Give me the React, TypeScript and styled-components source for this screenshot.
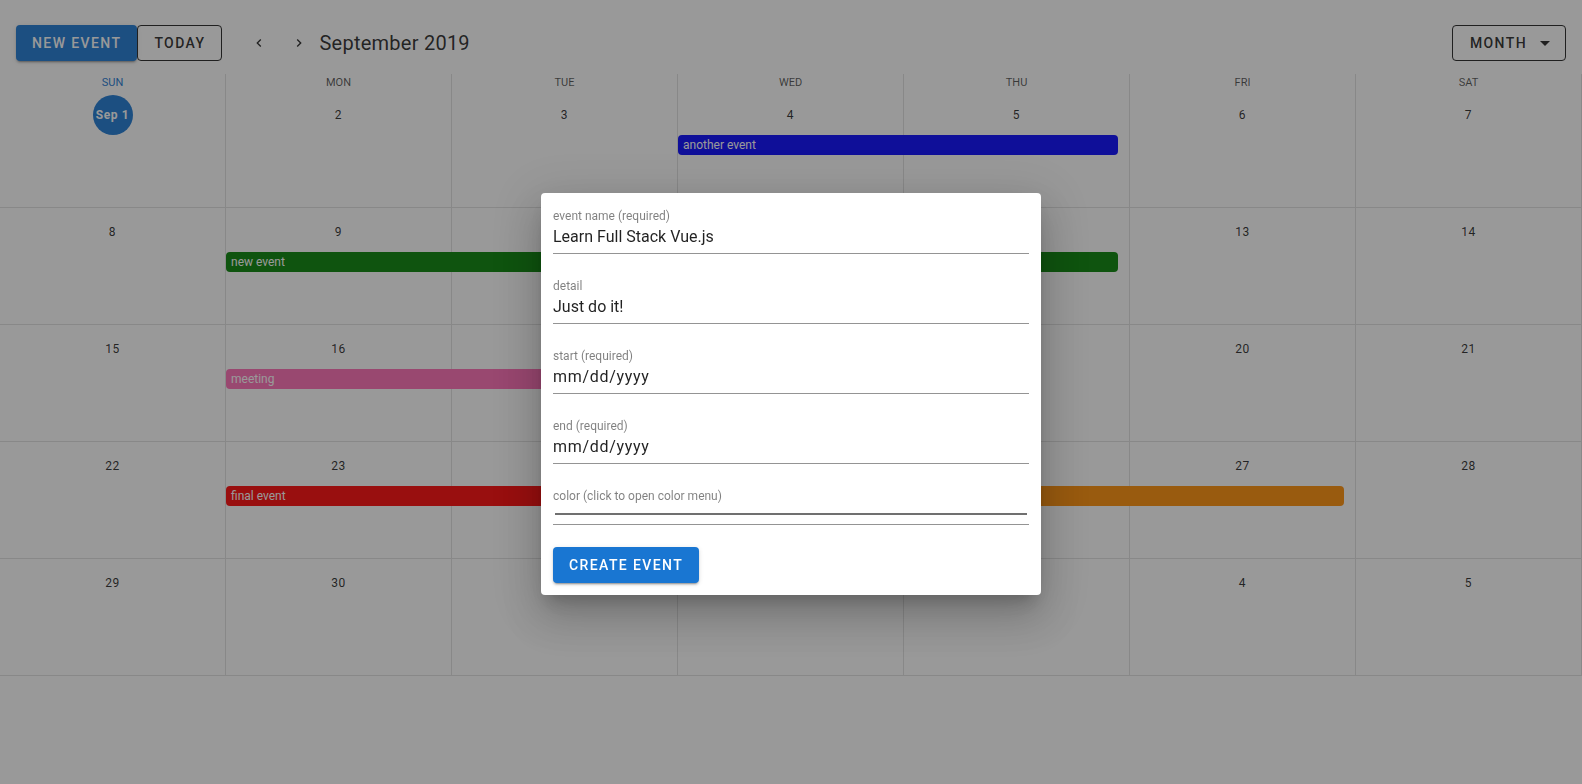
import React from "react";
import styled, { createGlobalStyle } from "styled-components";

const GlobalStyle = createGlobalStyle`
  html, body {
    margin: 0;
    padding: 0;
    background: #fff;
    font-family: Roboto, "Liberation Sans", Arial, sans-serif;
  }
  * {
    box-sizing: border-box;
  }
`;

const PRIMARY = "#1976d2";

const Page = styled.div`
  width: 100%;
  min-height: 784px;
  background: #fff;
`;

const TopStrip = styled.div`
  height: 12px;
  background: #fff;
`;

const Toolbar = styled.div`
  display: flex;
  align-items: center;
  height: 62px;
  padding: 13px 16px 13px;
`;

const Btn = styled.button<{ $variant: "primary" | "outlined" }>`
  display: inline-flex;
  align-items: center;
  justify-content: center;
  height: 36px;
  padding: 0 16px;
  border-radius: 4px;
  font-family: Roboto, "Liberation Sans", Arial, sans-serif;
  font-size: 14px;
  font-weight: 500;
  letter-spacing: 0.1em;
  text-transform: uppercase;
  white-space: nowrap;
  cursor: pointer;
  background: ${(p) => (p.$variant === "primary" ? PRIMARY : "transparent")};
  color: ${(p) => (p.$variant === "primary" ? "#fff" : "rgba(0,0,0,0.87)")};
  border: ${(p) =>
    p.$variant === "primary" ? "none" : "1px solid rgba(0,0,0,0.87)"};
  box-shadow: ${(p) =>
    p.$variant === "primary"
      ? "0 3px 1px -2px rgba(0,0,0,.2), 0 2px 2px 0 rgba(0,0,0,.14), 0 1px 5px 0 rgba(0,0,0,.12)"
      : "none"};
`;

const MenuButton = styled(Btn)`
  padding: 0 12px 0 17px;
`;

const NavButton = styled.button`
  width: 40px;
  height: 40px;
  border-radius: 50%;
  border: none;
  background: transparent;
  display: flex;
  align-items: center;
  justify-content: center;
  color: rgba(0, 0, 0, 0.87);
  padding: 0;
  cursor: pointer;
`;

const NavGroup = styled.div`
  display: flex;
  margin-left: 17px;
`;

const Title = styled.div`
  font-size: 20px;
  font-weight: 400;
  color: rgba(0, 0, 0, 0.87);
  letter-spacing: 0.0125em;
`;

const Spacer = styled.div`
  flex: 1;
`;

const MenuIcon = styled.span`
  display: inline-flex;
  margin-left: 6px;
  margin-right: -4px;
`;

const Calendar = styled.div`
  display: flex;
  flex-direction: column;
`;

const Head = styled.div`
  display: grid;
  grid-template-columns: repeat(7, 1fr);
  height: 17px;
`;

const HeadCell = styled.div<{ $today?: boolean }>`
  border-right: 1px solid #e0e0e0;
  text-align: center;
  font-size: 11px;
  line-height: 18px;
  text-transform: uppercase;
  color: ${(p) => (p.$today ? PRIMARY : "rgba(0,0,0,0.7)")};
`;

const Week = styled.div`
  display: grid;
  grid-template-columns: repeat(7, 1fr);
  grid-template-rows: 44px 20px 1fr;
  height: 117px;
  border-bottom: 1px solid #e0e0e0;
`;

const Day = styled.div<{ $col: number }>`
  grid-column: ${(p) => p.$col};
  grid-row: 1 / -1;
  border-right: 1px solid #e0e0e0;
  display: flex;
  justify-content: center;
  padding-top: 4px;
`;

const DayLabel = styled.div<{ $today?: boolean }>`
  width: 40px;
  height: 40px;
  border-radius: 50%;
  display: flex;
  align-items: center;
  justify-content: center;
  font-size: 12px;
  letter-spacing: 0.05em;
  font-weight: ${(p) => (p.$today ? 700 : 400)};
  background: ${(p) => (p.$today ? PRIMARY : "transparent")};
  color: ${(p) => (p.$today ? "#fff" : "rgba(0,0,0,0.87)")};
`;

const EventBar = styled.div<{ $start: number; $span: number; $color: string }>`
  grid-column: ${(p) => p.$start} / span ${(p) => p.$span};
  grid-row: 2;
  margin-right: 12px;
  background: ${(p) => p.$color};
  border-radius: 4px;
  color: #fff;
  font-size: 12px;
  font-weight: 400;
  line-height: 20px;
  padding: 0 5px;
  white-space: nowrap;
  overflow: hidden;
  z-index: 1;
`;

const Scrim = styled.div`
  position: fixed;
  inset: 0;
  background: rgba(33, 33, 33, 0.46);
  display: flex;
  align-items: center;
  justify-content: center;
  z-index: 10;
`;

const Dialog = styled.div`
  width: 500px;
  margin-top: 4px;
  background: #fff;
  border-radius: 4px;
  padding: 16px 12px 12px;
  box-shadow: 0 11px 15px -7px rgba(0, 0, 0, 0.2),
    0 24px 38px 3px rgba(0, 0, 0, 0.14), 0 9px 46px 8px rgba(0, 0, 0, 0.12);
`;

const Field = styled.div`
  margin-bottom: 25px;
`;

const FieldLabel = styled.div`
  font-size: 12px;
  line-height: 14px;
  color: rgba(0, 0, 0, 0.5);
`;

const FieldValue = styled.div<{ $date?: boolean }>`
  font-size: 16px;
  line-height: 20px;
  padding: 4px 0 6px;
  color: rgba(0, 0, 0, 0.87);
  letter-spacing: ${(p) => (p.$date ? "0.7px" : "normal")};
  border-bottom: 1px solid rgba(0, 0, 0, 0.42);
`;

const ColorField = styled.div`
  display: flex;
  flex-direction: column;
`;

const ColorBar = styled.div`
  height: 2px;
  margin: 10px 2px 0;
  background: rgba(0, 0, 0, 0.56);
`;

const ColorUnderline = styled.div`
  margin-top: 9px;
  border-bottom: 1px solid rgba(0, 0, 0, 0.42);
`;

const CreateButton = styled(Btn)`
  margin-top: 22px;
`;

const ChevronLeft = () => (
  <svg width="16" height="16" viewBox="0 0 24 24" fill="currentColor">
    <path d="M15.41,16.58L10.83,12L15.41,7.41L14,6L8,12L14,18L15.41,16.58Z" />
  </svg>
);

const ChevronRight = () => (
  <svg width="16" height="16" viewBox="0 0 24 24" fill="currentColor">
    <path d="M8.59,16.58L13.17,12L8.59,7.41L10,6L16,12L10,18L8.59,16.58Z" />
  </svg>
);

const MenuDown = () => (
  <svg width="24" height="24" viewBox="0 0 24 24" fill="currentColor">
    <path d="M7,10L12,15L17,10H7Z" />
  </svg>
);

const weekdays = ["Sun", "Mon", "Tue", "Wed", "Thu", "Fri", "Sat"];

const weeks: { days: string[]; events: { start: number; span: number; color: string; name: string }[] }[] = [
  {
    days: ["Sep 1", "2", "3", "4", "5", "6", "7"],
    events: [{ start: 4, span: 2, color: "#0000ff", name: "another event" }],
  },
  {
    days: ["8", "9", "10", "11", "12", "13", "14"],
    events: [{ start: 2, span: 4, color: "#008000", name: "new event" }],
  },
  {
    days: ["15", "16", "17", "18", "19", "20", "21"],
    events: [{ start: 2, span: 2, color: "#ff69b4", name: "meeting" }],
  },
  {
    days: ["22", "23", "24", "25", "26", "27", "28"],
    events: [
      { start: 2, span: 2, color: "#ff0000", name: "final event" },
      { start: 4, span: 3, color: "#ff8c00", name: "conference" },
    ],
  },
  {
    days: ["29", "30", "Oct 1", "2", "3", "4", "5"],
    events: [],
  },
];

export default function App() {
  return (
    <>
      <GlobalStyle />
      <Page>
        <TopStrip />
        <Toolbar>
          <Btn $variant="primary">New Event</Btn>
          <Btn $variant="outlined">Today</Btn>
          <NavGroup>
            <NavButton>
              <ChevronLeft />
            </NavButton>
            <NavButton>
              <ChevronRight />
            </NavButton>
          </NavGroup>
          <Title>September 2019</Title>
          <Spacer />
          <MenuButton $variant="outlined">
            Month
            <MenuIcon>
              <MenuDown />
            </MenuIcon>
          </MenuButton>
        </Toolbar>

        <Calendar>
          <Head>
            {weekdays.map((d, i) => (
              <HeadCell key={d} $today={i === 0}>
                {d}
              </HeadCell>
            ))}
          </Head>
          {weeks.map((w, wi) => (
            <Week key={wi}>
              {w.days.map((d, di) => (
                <Day key={di} $col={di + 1}>
                  <DayLabel $today={wi === 0 && di === 0}>{d}</DayLabel>
                </Day>
              ))}
              {w.events.map((e) => (
                <EventBar key={e.name} $start={e.start} $span={e.span} $color={e.color}>
                  {e.name}
                </EventBar>
              ))}
            </Week>
          ))}
        </Calendar>
      </Page>

      <Scrim>
        <Dialog>
          <Field>
            <FieldLabel>event name (required)</FieldLabel>
            <FieldValue>Learn Full Stack Vue.js</FieldValue>
          </Field>
          <Field>
            <FieldLabel>detail</FieldLabel>
            <FieldValue>Just do it!</FieldValue>
          </Field>
          <Field>
            <FieldLabel>start (required)</FieldLabel>
            <FieldValue $date>mm/dd/yyyy</FieldValue>
          </Field>
          <Field>
            <FieldLabel>end (required)</FieldLabel>
            <FieldValue $date>mm/dd/yyyy</FieldValue>
          </Field>
          <ColorField>
            <FieldLabel>color (click to open color menu)</FieldLabel>
            <ColorBar />
            <ColorUnderline />
          </ColorField>
          <CreateButton $variant="primary">Create Event</CreateButton>
        </Dialog>
      </Scrim>
    </>
  );
}
